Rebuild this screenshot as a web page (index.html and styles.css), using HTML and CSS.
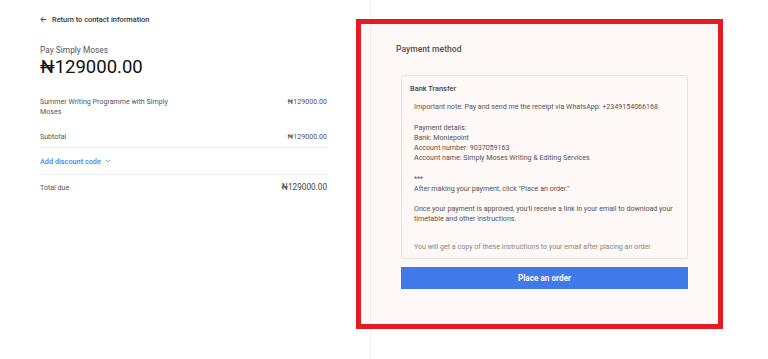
FILE: index.html
```html
<!DOCTYPE html>
<html>
  <head>
    <title>Checkout - Payment</title>
    <link rel="stylesheet" href="styles.css">
  </head>
  <body>
    <div class="page">
      <section class="summary">
        <a class="back-link" href="#">
          <svg class="back-icon" viewBox="0 0 10 10" width="7" height="7">
            <path d="M9 5H1.5M5 1.3L1.3 5L5 8.7" fill="none" stroke="#333" stroke-width="1.3" />
          </svg>
          Return to contact information
        </a>

        <div class="pay-to">Pay Simply Moses</div>
        <div class="pay-amount">₦129000.00</div>

        <div class="line-item">
          <div class="item-name">Summer Writing Programme with Simply Moses</div>
          <div class="item-price">₦129000.00</div>
        </div>

        <div class="row subtotal">
          <span>Subtotal</span>
          <span>₦129000.00</span>
        </div>

        <div class="row discount">
          <a href="#" class="discount-link">Add discount code
            <svg viewBox="0 0 10 10" width="6" height="6">
              <path d="M2 3.5L5 6.5L8 3.5" fill="none" stroke="#4285f4" stroke-width="1.3" />
            </svg>
          </a>
        </div>

        <div class="row total">
          <span>Total due</span>
          <span class="total-amount">₦129000.00</span>
        </div>
      </section>

      <section class="payment">
        <h2 class="payment-title">Payment method</h2>

        <div class="method-card">
          <div class="method-name">Bank Transfer</div>
          <div class="method-text">Important note: Pay and send me the receipt via WhatsApp: +2349154066168

Payment details:
Bank: Moniepoint
Account number: 9037059163
Account name: Simply Moses Writing &amp; Editing Services

***
After making your payment, click "Place an order."

Once your payment is approved, you'll receive a link in your email to download your timetable and other instructions.</div>
          <div class="method-note">You will get a copy of these instructions to your email after placing an order</div>
        </div>

        <button class="order-btn">Place an order</button>
      </section>

      <div class="highlight"></div>
    </div>
  </body>
</html>
```

FILE: styles.css
```css
body {
  margin: 0;
  background: #fff;
  font-family: Roboto, "Liberation Sans", sans-serif;
  color: #555;
}
.page {
  position: relative;
  display: flex;
  min-height: 359px;
}
.summary {
  width: 287px;
  margin-left: 40px;
  padding-top: 14px;
  font-size: 7.1px;
}
.back-link {
  display: flex;
  align-items: center;
  gap: 5px;
  color: #333;
  font-weight: 500;
  font-size: 7.4px;
  text-decoration: none;
  height: 10px;
}
.pay-to {
  margin-top: 21px;
  font-size: 8.4px;
  color: #555;
}
.pay-amount {
  font-size: 18.5px;
  color: #111;
  line-height: 24px;
}
.line-item {
  display: flex;
  justify-content: space-between;
  margin-top: 18px;
  line-height: 10px;
}
.item-name {
  width: 140px;
}
.row {
  display: flex;
  justify-content: space-between;
  align-items: center;
}
.subtotal {
  margin-top: 14px;
  height: 11px;
  padding-bottom: 5px;
  border-bottom: 1px solid #eee;
}
.discount {
  height: 26px;
  border-bottom: 1px solid #eee;
}
.discount-link {
  display: flex;
  align-items: center;
  gap: 4px;
  color: #4285f4;
  text-decoration: none;
  font-weight: 500;
  font-size: 7.3px;
}
.total {
  height: 24px;
}
.total-amount {
  font-size: 8.2px;
  color: #444;
}
.payment {
  flex: 1;
  margin-left: 43px;
  border-left: 1px solid #f2f2f2;
  padding: 43px 0 0 25px;
}
.payment-title {
  margin: 0;
  font-size: 8.6px;
  font-weight: 500;
  color: #555;
  line-height: 12px;
}
.method-card {
  width: 269px;
  margin: 20px 0 0 5px;
  padding: 8px 8px 6px 8px;
  border: 1px solid #ebe8e8;
  border-radius: 3px;
  background: #fff;
  font-size: 7.1px;
  line-height: 10.2px;
}
.method-name {
  font-weight: 500;
  color: #444;
  font-size: 7.4px;
}
.method-text {
  margin-top: 8px;
  padding-left: 4px;
  white-space: pre-line;
  color: #555;
}
.method-note {
  margin-top: 17px;
  padding-left: 4px;
  color: #888;
}
.order-btn {
  display: block;
  width: 287px;
  height: 22px;
  margin: 8px 0 0 5px;
  border: none;
  background: #3b7df2;
  color: #fff;
  font-family: Roboto, "Liberation Sans", sans-serif;
  font-weight: 700;
  font-size: 8.2px;
}
.highlight {
  position: absolute;
  left: 356px;
  top: 19px;
  width: 357px;
  height: 300px;
  border: 5px solid #e41b22;
  background: rgba(220, 60, 40, 0.035);
}
```
